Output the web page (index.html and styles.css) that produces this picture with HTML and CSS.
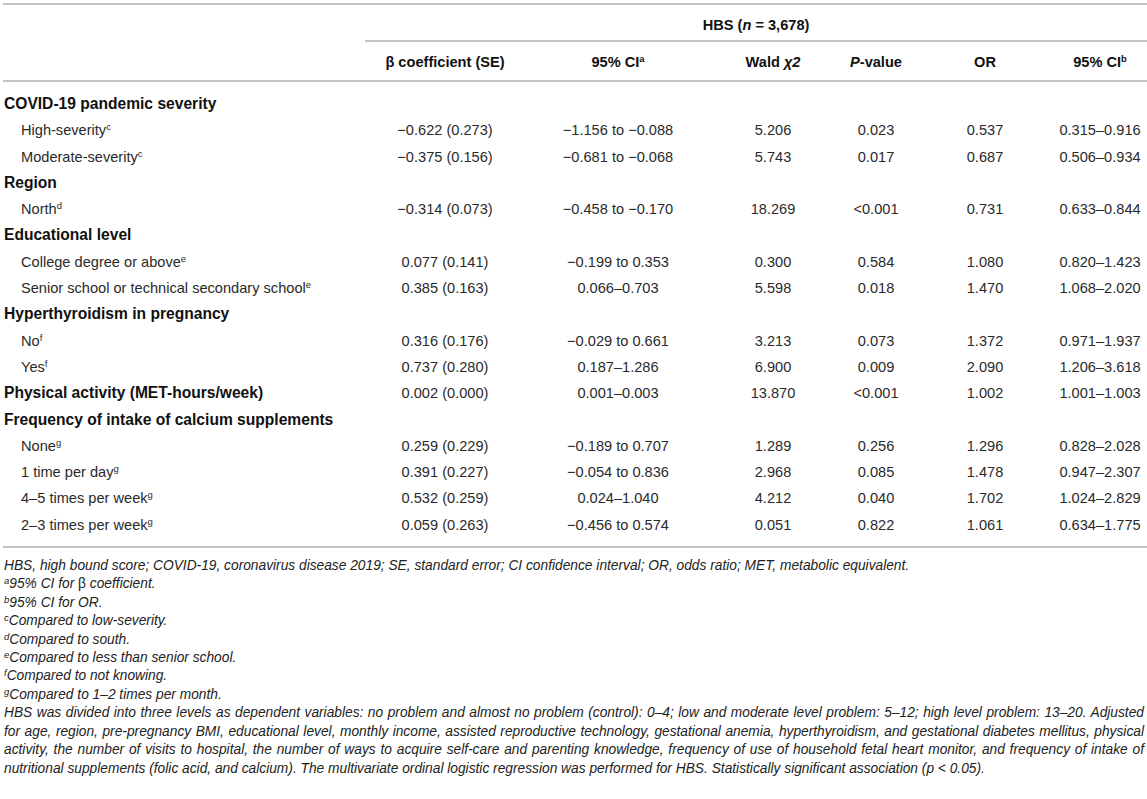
FILE: index.html
```html
<!doctype html>
<html>
<head>
    <meta charset="UTF-8">
    <title>HBS ordinal logistic regression</title>
    <link rel="stylesheet" href="styles.css">
</head>
<body>
<div class="page">
    <table class="tbl">
        <colgroup>
            <col class="c-name">
            <col class="c-beta">
            <col class="c-ci">
            <col class="c-wald">
            <col class="c-p">
            <col class="c-or">
            <col class="c-ci2">
        </colgroup>
        <thead>
            <tr class="head-top">
                <th></th>
                <th colspan="6" class="group">HBS (<i>n</i> = 3,678)</th>
            </tr>
            <tr class="head-cols">
                <th></th>
                <th>&beta; coefficient (SE)</th>
                <th>95% CI<sup>a</sup></th>
                <th>Wald <i>&chi;2</i></th>
                <th><i>P</i>-value</th>
                <th>OR</th>
                <th>95% CI<sup>b</sup></th>
            </tr>
        </thead>
        <tbody>
            <tr class="cat first"><td colspan="7">COVID-19 pandemic severity</td></tr>
            <tr><td class="sub">High-severity<sup>c</sup></td><td>&minus;0.622 (0.273)</td><td>&minus;1.156 to &minus;0.088</td><td>5.206</td><td>0.023</td><td>0.537</td><td>0.315&ndash;0.916</td></tr>
            <tr><td class="sub">Moderate-severity<sup>c</sup></td><td>&minus;0.375 (0.156)</td><td>&minus;0.681 to &minus;0.068</td><td>5.743</td><td>0.017</td><td>0.687</td><td>0.506&ndash;0.934</td></tr>
            <tr class="cat"><td colspan="7">Region</td></tr>
            <tr><td class="sub">North<sup>d</sup></td><td>&minus;0.314 (0.073)</td><td>&minus;0.458 to &minus;0.170</td><td>18.269</td><td>&lt;0.001</td><td>0.731</td><td>0.633&ndash;0.844</td></tr>
            <tr class="cat"><td colspan="7">Educational level</td></tr>
            <tr><td class="sub">College degree or above<sup>e</sup></td><td>0.077 (0.141)</td><td>&minus;0.199 to 0.353</td><td>0.300</td><td>0.584</td><td>1.080</td><td>0.820&ndash;1.423</td></tr>
            <tr><td class="sub">Senior school or technical secondary school<sup>e</sup></td><td>0.385 (0.163)</td><td>0.066&ndash;0.703</td><td>5.598</td><td>0.018</td><td>1.470</td><td>1.068&ndash;2.020</td></tr>
            <tr class="cat"><td colspan="7">Hyperthyroidism in pregnancy</td></tr>
            <tr><td class="sub">No<sup>f</sup></td><td>0.316 (0.176)</td><td>&minus;0.029 to 0.661</td><td>3.213</td><td>0.073</td><td>1.372</td><td>0.971&ndash;1.937</td></tr>
            <tr><td class="sub">Yes<sup>f</sup></td><td>0.737 (0.280)</td><td>0.187&ndash;1.286</td><td>6.900</td><td>0.009</td><td>2.090</td><td>1.206&ndash;3.618</td></tr>
            <tr class="cat-data"><td class="name">Physical activity (MET-hours/week)</td><td>0.002 (0.000)</td><td>0.001&ndash;0.003</td><td>13.870</td><td>&lt;0.001</td><td>1.002</td><td>1.001&ndash;1.003</td></tr>
            <tr class="cat"><td colspan="7">Frequency of intake of calcium supplements</td></tr>
            <tr><td class="sub">None<sup>g</sup></td><td>0.259 (0.229)</td><td>&minus;0.189 to 0.707</td><td>1.289</td><td>0.256</td><td>1.296</td><td>0.828&ndash;2.028</td></tr>
            <tr><td class="sub">1 time per day<sup>g</sup></td><td>0.391 (0.227)</td><td>&minus;0.054 to 0.836</td><td>2.968</td><td>0.085</td><td>1.478</td><td>0.947&ndash;2.307</td></tr>
            <tr><td class="sub">4&ndash;5 times per week<sup>g</sup></td><td>0.532 (0.259)</td><td>0.024&ndash;1.040</td><td>4.212</td><td>0.040</td><td>1.702</td><td>1.024&ndash;2.829</td></tr>
            <tr class="last"><td class="sub">2&ndash;3 times per week<sup>g</sup></td><td>0.059 (0.263)</td><td>&minus;0.456 to 0.574</td><td>0.051</td><td>0.822</td><td>1.061</td><td>0.634&ndash;1.775</td></tr>
        </tbody>
    </table>

    <div class="notes">
        <p>HBS, high bound score; COVID-19, coronavirus disease 2019; SE, standard error; CI confidence interval; OR, odds ratio; MET, metabolic equivalent.</p>
        <p><sup>a</sup>95% CI for <span class="up">&beta;</span> coefficient.</p>
        <p><sup>b</sup>95% CI for OR.</p>
        <p><sup>c</sup>Compared to low-severity.</p>
        <p><sup>d</sup>Compared to south.</p>
        <p><sup>e</sup>Compared to less than senior school.</p>
        <p><sup>f</sup>Compared to not knowing.</p>
        <p><sup>g</sup>Compared to 1&ndash;2 times per month.</p>
        <p class="long">HBS was divided into three levels as dependent variables: no problem and almost no problem (control): 0&ndash;4; low and moderate level problem: 5&ndash;12; high level problem: 13&ndash;20. Adjusted for age, region, pre-pregnancy BMI, educational level, monthly income, assisted reproductive technology, gestational anemia, hyperthyroidism, and gestational diabetes mellitus, physical activity, the number of visits to hospital, the number of ways to acquire self-care and parenting knowledge, frequency of use of household fetal heart monitor, and frequency of intake of nutritional supplements (folic acid, and calcium). The multivariate ordinal logistic regression was performed for HBS. Statistically significant association (p &lt; 0.05).</p>
    </div>
</div>
</body>
</html>
```

FILE: styles.css
```css
* {
    margin: 0;
    padding: 0;
}

body {
    background: #fff;
    color: #222;
    font-family: "Liberation Sans", Arial, sans-serif;
    font-size: 14.6px;
}

.page {
    padding: 3px 0 0 3px;
}

.tbl {
    width: 1144px;
    border-collapse: collapse;
    table-layout: fixed;
    border-top: 2px solid #c4c4c4;
}

.tbl .c-name { width: 362px; }
.tbl .c-beta { width: 160px; }
.tbl .c-ci { width: 186px; }
.tbl .c-wald { width: 124px; }
.tbl .c-p { width: 82px; }
.tbl .c-or { width: 136px; }
.tbl .c-ci2 { width: 94px; }

.tbl th {
    font-weight: bold;
    color: #111;
    text-align: center;
    white-space: nowrap;
    line-height: 18px;
}

.tbl .head-top th {
    padding: 11px 0 6px;
}

.tbl .head-top .group {
    border-bottom: 2px solid #c4c4c4;
}

.tbl .head-cols th {
    padding: 11px 0 9px;
    border-bottom: 2px solid #c4c4c4;
}

.tbl sup {
    font-size: 9.5px;
    line-height: 0;
    vertical-align: 5px;
}

.tbl td {
    padding: 4px 0;
    line-height: 18.3px;
    text-align: center;
    white-space: nowrap;
    color: #2a2a2a;
}

.tbl td:first-child {
    text-align: left;
    padding-left: 1px;
}

.tbl td.sub {
    padding-left: 18px;
}

.tbl .cat td,
.tbl .cat-data td.name {
    font-weight: bold;
    font-size: 15.6px;
    color: #111;
}

.tbl .first td {
    padding-top: 13px;
}

.tbl .last td {
    padding-bottom: 12px;
    border-bottom: 2px solid #c4c4c4;
}

.notes {
    width: 1140px;
    margin-top: 9px;
    padding-left: 1px;
    font-size: 13.75px;
    font-style: italic;
    line-height: 18.4px;
    color: #222;
}

.notes sup {
    font-size: 9.5px;
    line-height: 0;
    vertical-align: 4px;
}

.notes .up {
    font-style: normal;
}

.notes .long {
    text-align: justify;
}
```
